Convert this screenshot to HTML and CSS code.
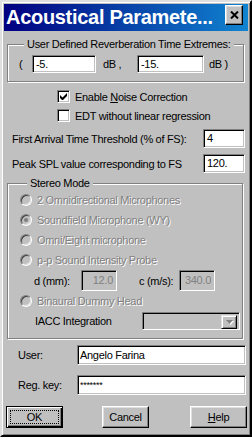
FILE: index.html
```html
<!DOCTYPE html>
<html>
<head>
	<meta charset="utf-8">
	<title>Acoustical Parameters</title>
	<link rel="stylesheet" href="styles.css">
</head>
<body>
	<div class="window">
		<div class="titlebar">
			<span class="title">Acoustical Paramete...</span>
			<span class="close"><svg width="9" height="8" viewBox="0 0 9 8"><path d="M1 0.5l7 7M8 0.5l-7 7" stroke="#000" stroke-width="2"/></svg></span>
		</div>
		<div class="content">
			<fieldset class="group group1">
				<legend>User Defined Reverberation Time Extremes:</legend>
				<div class="extremes">
					<span class="paren">(</span>
					<span class="field w64">-5.</span>
					<span class="unit">dB ,</span>
					<span class="field w67">-15.</span>
					<span class="unit last">dB )</span>
				</div>
			</fieldset>

			<div class="checks">
				<div class="check"><span class="box"><svg width="7" height="7" viewBox="0 0 7 7"><path d="M0 2v3l2 2h1l4-4V0L2.5 4.5z" fill="#000"/></svg></span><span>Enable <u>N</u>oise Correction</span></div>
				<div class="check"><span class="box"></span><span>EDT without linear regression</span></div>
			</div>

			<div class="row">
				<span>First Arrival Time Threshold (% of FS):</span>
				<span class="field w42">4</span>
			</div>
			<div class="row">
				<span>Peak SPL value corresponding to FS</span>
				<span class="field w42">120.</span>
			</div>

			<fieldset class="group group2">
				<legend>Stereo Mode</legend>
				<div class="radio off"><span class="dot"></span>2 Omnidirectional Microphones</div>
				<div class="radio off"><span class="dot sel"></span>Soundfield Microphone (WY)</div>
				<div class="radio off"><span class="dot"></span>Omni/Eight microphone</div>
				<div class="radio off"><span class="dot"></span>p-p Sound Intensity Probe</div>
				<div class="probe">
					<span class="d-label">d (mm):</span>
					<span class="field dis w36">12.0</span>
					<span class="c-label">c (m/s):</span>
					<span class="field dis w36">340.0</span>
				</div>
				<div class="radio off"><span class="dot"></span>Binaural Dummy Head</div>
				<div class="iacc">
					<span class="iacc-label">IACC Integration</span>
					<span class="combo"><span class="drop"><svg width="7" height="4" viewBox="0 0 7 4"><path d="M0 0h7L3.5 4z" fill="#808080"/></svg></span></span>
				</div>
			</fieldset>

			<div class="reg">
				<span class="reg-label">User:</span>
				<span class="field wide">Angelo Farina</span>
			</div>
			<div class="reg">
				<span class="reg-label">Reg. key:</span>
				<span class="field wide stars">*******</span>
			</div>

			<div class="buttons">
				<span class="btn default"><span class="focus">OK</span></span>
				<span class="btn cancel">Cancel</span>
				<span class="btn help"><u>H</u>elp</span>
			</div>
		</div>
	</div>
</body>
</html>
```

FILE: styles.css
```css
body
{
	margin: 0;
	font-family: "Liberation Sans", Arial, sans-serif;
	font-size: 11px;
	letter-spacing: -0.3px;
	color: #000;
	background: #c0c0c0;
	white-space: nowrap;
}
.window
{
	width: 252px;
	height: 437px;
	box-sizing: border-box;
	background: #c0c0c0;
	border: 2px solid;
	border-color: #dfdfdf #000 #000 #dfdfdf;
	box-shadow: inset 1px 1px #fff, inset -1px -1px #808080;
	padding: 2px;
	display: flex;
	flex-direction: column;
	overflow: hidden;
}
.titlebar
{
	height: 27px;
	flex-shrink: 0;
	background: linear-gradient(to right, #000080, #1084d0);
	display: flex;
	align-items: flex-start;
	justify-content: space-between;
	padding: 0 5px 0 2px;
}
.title
{
	color: #fff;
	font-weight: bold;
	font-size: 20px;
	line-height: 27px;
	letter-spacing: -0.3px;
}
.close
{
	flex-shrink: 0;
	margin-top: 1px;
	width: 18px;
	height: 20px;
	box-sizing: border-box;
	background: #c0c0c0;
	border: 1px solid;
	border-color: #fff #000 #000 #fff;
	box-shadow: inset -1px -1px #808080, inset 1px 1px #dfdfdf;
	display: flex;
	align-items: center;
	justify-content: center;
}
.content
{
	padding: 0 3px;
	display: flex;
	flex-direction: column;
}
.group
{
	margin: 0;
	border: 1px solid #808080;
	box-shadow: inset 1px 1px #fff, 1px 1px #fff;
	width: 236px;
	box-sizing: border-box;
}
.group legend
{
	padding: 0 3px;
	margin-left: 5px;
	line-height: 14px;
	background: #c0c0c0;
}
.group1
{
	margin-top: 6px;
	padding: 4px 0 8px 11px;
}
.extremes
{
	display: flex;
	align-items: center;
}
.paren
{
	width: 13px;
}
.unit
{
	margin-left: 7px;
	width: 34px;
}
.unit.last
{
	margin-left: 5px;
}
.field
{
	display: inline-block;
	height: 18px;
	box-sizing: border-box;
	background: #fff;
	border: 1px solid;
	border-color: #808080 #fff #fff #808080;
	box-shadow: inset 1px 1px #000, inset -1px -1px #c0c0c0;
	padding: 2px 3px;
	line-height: 13px;
	overflow: hidden;
	flex-shrink: 0;
}
.w64 { width: 64px; }
.w67 { width: 67px; }
.w42 { width: 42px; height: 19px; }
.w36 { width: 36px; height: 21px; }
.dis
{
	background: #c0c0c0;
	color: #808080;
	text-align: right;
	padding-top: 3px;
}
.checks
{
	margin-top: 5px;
	padding-left: 50px;
}
.check
{
	display: flex;
	align-items: center;
	height: 19px;
}
.box
{
	width: 13px;
	height: 13px;
	box-sizing: border-box;
	margin-right: 5px;
	background: #fff;
	border: 1px solid;
	border-color: #808080 #fff #fff #808080;
	box-shadow: inset 1px 1px #000, inset -1px -1px #c0c0c0;
	display: flex;
	align-items: center;
	justify-content: center;
}
.row
{
	display: flex;
	align-items: center;
	justify-content: space-between;
	padding-left: 5px;
	margin-top: 4px;
	height: 19px;
}
.row + .row
{
	margin-top: 6px;
}
.group2
{
	margin-top: 3px;
	padding: 0 0 7px 12px;
}
.group2 legend
{
	margin-left: 7px;
}
.radio
{
	display: flex;
	align-items: center;
	height: 20px;
}
.off
{
	color: #808080;
	text-shadow: 1px 1px #fff;
}
.dot
{
	width: 12px;
	height: 12px;
	box-sizing: border-box;
	border-radius: 50%;
	border: 1px solid;
	border-color: #808080 #fff #fff #808080;
	box-shadow: inset 1px 1px #404040, inset -1px -1px #dfdfdf;
	background: #c0c0c0;
	margin-right: 5px;
	display: flex;
	align-items: center;
	justify-content: center;
}
.dot.sel::after
{
	content: "";
	width: 4px;
	height: 4px;
	border-radius: 50%;
	background: #808080;
}
.probe
{
	display: flex;
	align-items: center;
	height: 21px;
	padding-left: 14px;
}
.d-label
{
	width: 47px;
}
.c-label
{
	margin-left: 22px;
	width: 40px;
}
.iacc
{
	display: flex;
	align-items: center;
	height: 20px;
	padding-left: 15px;
}
.iacc-label
{
	width: 107px;
}
.combo
{
	width: 98px;
	height: 18px;
	box-sizing: border-box;
	background: #c0c0c0;
	border: 1px solid;
	border-color: #808080 #fff #fff #808080;
	box-shadow: inset 1px 1px #000, inset -1px -1px #c0c0c0;
	display: flex;
	justify-content: flex-end;
	padding: 2px;
}
.drop
{
	width: 16px;
	height: 14px;
	box-sizing: border-box;
	border: 1px solid;
	border-color: #dfdfdf #000 #000 #dfdfdf;
	box-shadow: inset 1px 1px #fff, inset -1px -1px #808080;
	display: flex;
	align-items: center;
	justify-content: center;
}
.drop svg
{
	filter: drop-shadow(1px 1px #fff);
}
.reg
{
	display: flex;
	align-items: center;
	margin-top: 6px;
	height: 20px;
}
.reg + .reg
{
	margin-top: 10px;
}
.reg-label
{
	width: 70px;
	padding-left: 11px;
	box-sizing: border-box;
	flex-shrink: 0;
}
.wide
{
	width: 169px;
	height: 20px;
	padding: 3px 2px;
}
.stars
{
	font-size: 9px;
	padding-top: 3px;
}
.buttons
{
	display: flex;
	margin: 11px -2px 0 -1px;
}
.btn
{
	width: 57px;
	height: 22px;
	box-sizing: border-box;
	border: 1px solid;
	border-color: #fff #000 #000 #fff;
	box-shadow: inset -1px -1px #808080, inset 1px 1px #dfdfdf;
	display: flex;
	align-items: center;
	justify-content: center;
}
.cancel
{
	width: 47px;
	margin-left: 39px;
}
.help
{
	margin-left: auto;
}
.default
{
	border: 1px solid #000;
	box-shadow: inset 1px 1px #fff, inset -1px -1px #000, inset -2px -2px #808080;
	padding: 3px;
}
.focus
{
	flex: 1;
	align-self: stretch;
	border: 1px dotted #000;
	display: flex;
	align-items: center;
	justify-content: center;
}
```
